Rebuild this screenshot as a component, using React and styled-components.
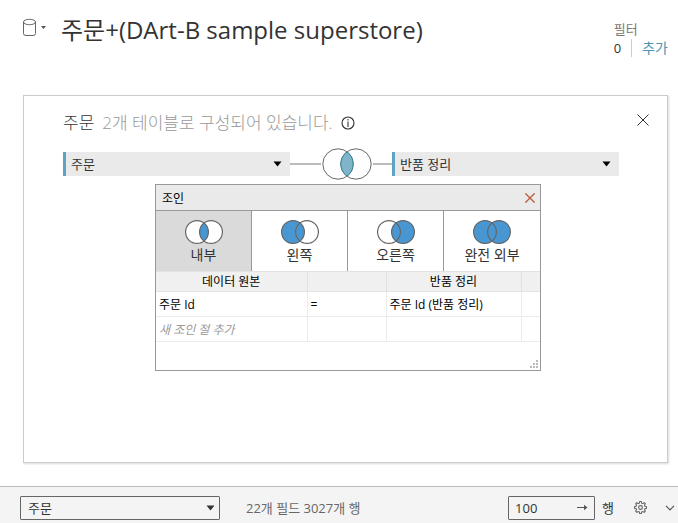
import React, { useState } from "react";
import styled, { createGlobalStyle } from "styled-components";

const GlobalStyle = createGlobalStyle`
  *, *::before, *::after { box-sizing: border-box; }
  body { margin: 0; background: #fff; }
  body, button, input, select {
    font-family: "Open Sans", "Noto Sans CJK KR", sans-serif;
    color: #333;
  }
  button { border: 0; padding: 0; background: none; cursor: pointer; }
  svg { display: block; flex: none; }
`;

const Page = styled.div`
  min-height: 100vh;
  display: flex;
  flex-direction: column;
`;

const Header = styled.header`
  display: flex;
  align-items: flex-start;
  height: 95px;
  padding: 10px 10px 0 22px;
`;

const SourceButton = styled.button`
  display: flex;
  align-items: center;
  gap: 4px;
  margin-top: 8px;
`;

const Title = styled.h1`
  flex: 1;
  margin: 0 0 0 15px;
  font-size: 24px;
  font-weight: 400;
  line-height: 40px;
  white-space: nowrap;
`;

const Filters = styled.div`
  margin-top: 10px;
  font-size: 13px;
  line-height: 19px;
  color: #777;
`;

const FilterLine = styled.div`
  display: flex;
  align-items: center;
  height: 18px;
  color: #333;
`;

const AddLink = styled.a`
  margin-left: 10px;
  padding-left: 10px;
  border-left: 1px solid #ccc;
  color: #4996b2;
  font-size: 14px;
  line-height: 18px;
  text-decoration: none;
`;

const Card = styled.section`
  flex: 1;
  margin: 0 10px 23px 23px;
  padding: 15px 48px 0 39px;
  border: 1px solid #ccc;
  box-shadow: 1px 1px 2px rgba(0, 0, 0, 0.15);
`;

const CardHeader = styled.div`
  display: flex;
  align-items: center;
  height: 24px;
  margin-right: -30px;
`;

const CardTitle = styled.h2`
  margin: 0;
  font-size: 17px;
  font-weight: 300;
  line-height: 24px;
`;

const CardNote = styled.span`
  margin: 0 8px;
  color: #999;
  font-size: 17px;
  font-weight: 300;
  line-height: 24px;
  white-space: nowrap;
`;

const CloseButton = styled.button`
  align-self: flex-start;
  margin: 3px 0 0 auto;
`;

const JoinRow = styled.div`
  display: grid;
  grid-template-columns: 1fr 102px 1fr;
  align-items: center;
  height: 32px;
  margin-top: 13px;
`;

const SelectBox = styled.div`
  display: grid;
  align-items: center;
  width: ${(p) => p.$width || "auto"};
  height: 24px;
  > * { grid-area: 1 / 1; }
  > svg { justify-self: end; margin-right: ${(p) => (p.$outlined ? 5 : 8)}px; pointer-events: none; }
`;

const Select = styled.select`
  appearance: none;
  width: 100%;
  height: 24px;
  margin: 0;
  padding: 0 24px 0 ${(p) => (p.$outlined ? 7 : 5)}px;
  border: ${(p) => (p.$outlined ? "1px solid #666" : "0")};
  border-left: ${(p) => (p.$outlined ? "1px solid #666" : "3px solid #5fa3c4")};
  border-radius: ${(p) => (p.$outlined ? 1 : 0)}px;
  background: ${(p) => (p.$outlined ? "#f4f4f4" : "#eaeaea")};
  font-size: 13px;
`;

const Connector = styled.button`
  display: flex;
  align-items: center;
  gap: 1px;
  &::before, &::after { content: ""; height: 2px; background: #bbb; }
  &::before { width: 31px; }
  &::after { flex: 1; }
`;

const Dialog = styled.div`
  width: 386px;
  height: 187px;
  margin: 4px 0 0 92px;
  border: 1px solid #999;
  background: #fff;
  color: #000;
  display: flex;
  flex-direction: column;
`;

const DialogBar = styled.div`
  display: flex;
  align-items: center;
  justify-content: space-between;
  height: 26px;
  padding: 0 5px 0 6px;
  border-bottom: 1px solid #999;
  background: #eaeaea;
  font-size: 12px;
`;

const JoinTypes = styled.div`
  display: grid;
  grid-template-columns: repeat(4, 1fr);
  height: 60px;
`;

const JoinType = styled.button`
  display: flex;
  flex-direction: column;
  align-items: center;
  padding-top: 9px;
  font-size: 14px;
  line-height: 22px;
  background: ${(p) => (p.$active ? "#dadada" : "#fff")};
  border-right: 1px solid #999;
  &:last-child { border-right: 0; }
`;

const Clauses = styled.table`
  width: 100%;
  table-layout: fixed;
  border-collapse: collapse;
  font-size: 12px;
  line-height: 18px;
  th {
    height: 20px;
    padding: 0;
    background: #f0f0f0;
    font-weight: 400;
    border: 1px solid #e2e2e2;
  }
  td {
    height: 25px;
    padding: 2px 3px 0;
    border: 1px solid #ebebeb;
    white-space: nowrap;
  }
  th:first-child, td:first-child { border-left: 0; }
  th:last-child, td:last-child { border-right: 0; }
`;

const Placeholder = styled.em`
  color: #999;
`;

const Grip = styled.svg`
  margin: auto 1px 1px auto;
`;

const Footer = styled.footer`
  display: flex;
  align-items: center;
  height: 37px;
  padding: 5px 3px 0 20px;
  border-top: 1px solid #bbb;
  background: #f4f4f4;
  font-size: 13px;
`;

const Summary = styled.span`
  flex: 1;
  margin-left: 26px;
  color: #666;
  white-space: nowrap;
`;

const RowCount = styled.label`
  display: flex;
  align-items: center;
  gap: 7px;
`;

const CountBox = styled.span`
  display: flex;
  align-items: center;
  width: 87px;
  height: 24px;
  padding: 0 6px;
  border: 1px solid #666;
  border-radius: 1px;
`;

const CountInput = styled.input`
  flex: 1;
  min-width: 0;
  padding: 0;
  border: 0;
  outline: 0;
  background: none;
  font-size: 13px;
`;

const Tools = styled.div`
  display: flex;
  align-items: center;
  gap: 18px;
  margin-left: 20px;
`;

const Caret = ({ color = "#000" }) => (
  <svg width="9" height="6" viewBox="0 0 9 6" aria-hidden="true">
    <path d="M0.5 0.5h8L4.5 5.5z" fill={color} />
  </svg>
);

const Cross = ({ size, color, width = 1 }) => (
  <svg width={size} height={size} viewBox="0 0 12 12" aria-hidden="true">
    <path d="M0.5 0.5l11 11M11.5 0.5l-11 11" stroke={color} strokeWidth={width} fill="none" />
  </svg>
);

const JoinIcon = ({ left = "#fff", right = "#fff" }) => (
  <svg width="38" height="24" viewBox="0 0 38 24" aria-hidden="true">
    <circle cx="12" cy="12" r="11.5" fill={left} />
    <circle cx="26" cy="12" r="11.5" fill={right} />
    <path d="M19 2.88a11.5 11.5 0 0 1 0 18.24a11.5 11.5 0 0 1 0-18.24z" fill="#4897d3" />
    <circle cx="12" cy="12" r="11.4" fill="none" stroke="#666" strokeWidth="1.2" />
    <circle cx="26" cy="12" r="11.4" fill="none" stroke="#666" strokeWidth="1.2" />
  </svg>
);

const BLUE = "#4897d3";
const joinTypes = [
  { label: "내부" },
  { label: "왼쪽", left: BLUE },
  { label: "오른쪽", right: BLUE },
  { label: "완전 외부", left: BLUE, right: BLUE },
];

const TableSelect = ({ label, value, outlined, width }) => (
  <SelectBox $outlined={outlined} $width={width}>
    <Select aria-label={label} $outlined={outlined} defaultValue={value}>
      <option>주문</option>
      <option>반품 정리</option>
    </Select>
    <Caret color={outlined ? "#333" : "#000"} />
  </SelectBox>
);

export default function App() {
  const [active, setActive] = useState("내부");
  return (
    <Page>
      <GlobalStyle />
      <Header>
        <SourceButton aria-label="데이터 원본">
          <svg width="15" height="19" viewBox="0 0 15 19" fill="none" stroke="#666">
            <ellipse cx="7.5" cy="4" rx="6" ry="2.7" />
            <path d="M1.5 4v11.500q0 2 2.500 2h7q2.500 0 2.500-2V4" />
          </svg>
          <svg width="5" height="3" viewBox="0 0 5 3">
            <path d="M0 0h5L2.5 3z" fill="#555" />
          </svg>
        </SourceButton>
        <Title>주문+(DArt-B sample superstore)</Title>
        <Filters>
          필터
          <FilterLine>
            0<AddLink href="#filters">추가</AddLink>
          </FilterLine>
        </Filters>
      </Header>

      <Card>
        <CardHeader>
          <CardTitle>주문</CardTitle>
          <CardNote>2개 테이블로 구성되어 있습니다.</CardNote>
          <svg width="14" height="14" viewBox="0 0 14 14" aria-hidden="true">
            <circle cx="7" cy="7" r="6" fill="none" stroke="#333" strokeWidth="1.1" />
            <path d="M6.5 3h1v1.5h-1zM6.5 5.5h1V11h-1z" fill="#222" />
          </svg>
          <CloseButton aria-label="닫기">
            <Cross size={12} color="#333" />
          </CloseButton>
        </CardHeader>

        <JoinRow>
          <TableSelect label="왼쪽 테이블" value="주문" />
          <Connector aria-label="조인 편집">
            <svg width="50" height="32" viewBox="0 0 50 32">
              <circle cx="16" cy="16" r="15.2" fill="#fff" />
              <circle cx="34" cy="16" r="15.2" fill="#fff" />
              <circle cx="16" cy="16" r="15.2" fill="none" stroke="#666" />
              <circle cx="34" cy="16" r="15.2" fill="none" stroke="#666" />
              <path d="M25 3.75a15.2 15.2 0 0 1 0 24.5a15.2 15.2 0 0 1 0-24.5z" fill="#7fb5c9" stroke="#33819c" />
            </svg>
          </Connector>
          <TableSelect label="오른쪽 테이블" value="반품 정리" />
        </JoinRow>

        <Dialog role="dialog" aria-label="조인">
          <DialogBar>
            조인
            <button aria-label="조인 닫기">
              <Cross size={10} color="#b85c3c" width={1.6} />
            </button>
          </DialogBar>
          <JoinTypes>
            {joinTypes.map(({ label, left, right }) => (
              <JoinType key={label} $active={active === label} onClick={() => setActive(label)}>
                <JoinIcon left={left} right={right} />
                {label}
              </JoinType>
            ))}
          </JoinTypes>
          <Clauses>
            <colgroup>
              <col width="151" />
              <col width="79" />
              <col width="135" />
              <col />
            </colgroup>
            <thead>
              <tr>
                <th>데이터 원본</th>
                <th />
                <th>반품 정리</th>
                <th />
              </tr>
            </thead>
            <tbody>
              <tr>
                <td>주문 Id</td>
                <td>=</td>
                <td>주문 Id (반품 정리)</td>
                <td />
              </tr>
              <tr>
                <td><Placeholder>새 조인 절 추가</Placeholder></td>
                <td />
                <td />
                <td />
              </tr>
            </tbody>
          </Clauses>
          <Grip width="9" height="9" viewBox="0 0 9 9" fill="#bbb" aria-hidden="true">
            <path d="M6 0h2v2H6zM3 3h2v2H3zM6 3h2v2H6zM0 6h2v2H0zM3 6h2v2H3zM6 6h2v2H6z" />
          </Grip>
        </Dialog>
      </Card>

      <Footer>
        <TableSelect label="테이블" value="주문" outlined width="200px" />
        <Summary>22개 필드 3027개 행</Summary>
        <RowCount>
          <CountBox>
            <CountInput defaultValue="100" />
            <svg width="11" height="7" viewBox="0 0 11 7" aria-hidden="true">
              <path d="M0 3.5h8" stroke="#555" />
              <path d="M7 0.8l3.5 2.7L7 6.2z" fill="#555" />
            </svg>
          </CountBox>
          행
        </RowCount>
        <Tools>
          <button aria-label="설정">
            <svg width="13" height="13" viewBox="0 0 24 24" fill="none" stroke="#666" strokeWidth="2">
              <path d="M9.8 4l.7-3h3l.7 3 2 .8 2.600-1.600 2.100 2.100-1.600 2.600.8 2 3 .7v3l-3 .7-.8 2 1.600 2.600-2.100 2.100-2.600-1.600-2 .8-.7 3h-3l-.7-3-2-.8-2.600 1.600-2.100-2.100 1.600-2.600-.8-2-3-.7v-3l3-.7.8-2-1.600-2.600 2.100-2.100 2.600 1.600z" />
              <circle cx="12" cy="12" r="3.500" />
            </svg>
          </button>
          <button aria-label="펼치기">
            <svg width="10" height="6" viewBox="0 0 10 6" fill="none" stroke="#555" strokeWidth="1.2">
              <path d="M1 0.800l4 4 4-4" />
            </svg>
          </button>
        </Tools>
      </Footer>
    </Page>
  );
}
